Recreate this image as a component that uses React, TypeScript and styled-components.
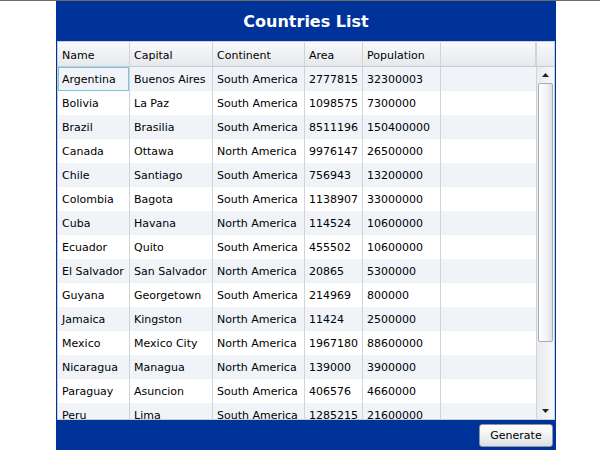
import React from "react";
import styled, { createGlobalStyle } from "styled-components";

const Global = createGlobalStyle`
  html, body { margin: 0; padding: 0; background: #ffffff; }
  body { font-family: "DejaVu Sans", Verdana, sans-serif; }
`;

const TopLine = styled.div`
  height: 1px;
  background: #6e6e60;
`;

const Panel = styled.div`
  width: 500px;
  height: 449px;
  margin-left: 56px;
  background: #003399;
  display: flex;
  flex-direction: column;
`;

const Title = styled.h1`
  margin: 0;
  height: 40px;
  display: flex;
  align-items: center;
  justify-content: center;
  color: #ffffff;
  font-family: "DejaVu Sans", Verdana, sans-serif;
  font-weight: bold;
  font-size: 16px;
`;

const Grid = styled.div`
  margin: 0 1px;
  height: 377px;
  background: #ffffff;
  border: 1px solid #c8ced6;
  display: flex;
  overflow: hidden;
`;

const Table = styled.div`
  flex: 1;
  display: flex;
  flex-direction: column;
  overflow: hidden;
`;

const cols = "72px 83px 92px 58px 78px 1fr";

const HeaderRow = styled.div`
  display: grid;
  grid-template-columns: ${cols};
  height: 24px;
  flex-shrink: 0;
  background: linear-gradient(#f8f9fa, #e6e9ec);
  border-bottom: 1px solid #c6cbd1;
`;

const HeaderCell = styled.div`
  display: flex;
  align-items: center;
  padding: 2px 0 0 4px;
  font-size: 11px;
  color: #000;
  border-right: 1px solid #d0d4d8;
`;

const Row = styled.div<{ $alt: boolean }>`
  display: grid;
  grid-template-columns: ${cols};
  height: 24px;
  flex-shrink: 0;
  background: ${(p) => (p.$alt ? "#f0f3f8" : "#ffffff")};
`;

const Cell = styled.div<{ $selected?: boolean; $last?: boolean }>`
  display: flex;
  align-items: center;
  padding-left: 4px;
  font-size: 11px;
  color: #000;
  white-space: nowrap;
  overflow: hidden;
  box-sizing: border-box;
  border-right: ${(p) => (p.$last ? "none" : "1px solid #d0d4d8")};
  ${(p) => (p.$selected ? "box-shadow: inset 0 0 0 1px #7ec5dc;" : "")}
`;

const ScrollCol = styled.div`
  width: 17px;
  display: flex;
  flex-direction: column;
  border-left: 1px solid #d0d4d8;
  background: linear-gradient(90deg, #e9ebee, #f6f7f8);
`;

const ScrollCorner = styled.div`
  height: 24px;
  background: linear-gradient(#f8f9fa, #e6e9ec);
  border-bottom: 1px solid #c6cbd1;
`;

const ArrowBox = styled.div`
  height: 16px;
  display: flex;
  align-items: center;
  justify-content: center;
`;

const Thumb = styled.div`
  margin: 0 1px;
  height: 257px;
  border: 1px solid #a6adb6;
  border-radius: 2px;
  background: linear-gradient(90deg, #ffffff, #f1f2f4 60%, #dde0e4);
`;

const Track = styled.div`
  flex: 1;
`;

const Footer = styled.div`
  flex: 1;
  display: flex;
  align-items: center;
  justify-content: flex-end;
  padding-right: 3px;
`;

const Button = styled.button`
  width: 74px;
  height: 23px;
  border: 1px solid #8e959d;
  border-radius: 3px;
  background: linear-gradient(#ffffff, #f1f2f3 50%, #dcdfe3);
  font-family: "DejaVu Sans", Verdana, sans-serif;
  font-size: 11px;
  color: #000;
  padding: 0;
`;

const data: [string, string, string, number, number][] = [
  ["Argentina", "Buenos Aires", "South America", 2777815, 32300003],
  ["Bolivia", "La Paz", "South America", 1098575, 7300000],
  ["Brazil", "Brasilia", "South America", 8511196, 150400000],
  ["Canada", "Ottawa", "North America", 9976147, 26500000],
  ["Chile", "Santiago", "South America", 756943, 13200000],
  ["Colombia", "Bagota", "South America", 1138907, 33000000],
  ["Cuba", "Havana", "North America", 114524, 10600000],
  ["Ecuador", "Quito", "South America", 455502, 10600000],
  ["El Salvador", "San Salvador", "North America", 20865, 5300000],
  ["Guyana", "Georgetown", "South America", 214969, 800000],
  ["Jamaica", "Kingston", "North America", 11424, 2500000],
  ["Mexico", "Mexico City", "North America", 1967180, 88600000],
  ["Nicaragua", "Managua", "North America", 139000, 3900000],
  ["Paraguay", "Asuncion", "South America", 406576, 4660000],
  ["Peru", "Lima", "South America", 1285215, 21600000],
];

const Up = () => (
  <svg width="7" height="4" viewBox="0 0 7 4"><path d="M0 4 L3.5 0 L7 4 Z" fill="#222" /></svg>
);
const Down = () => (
  <svg width="7" height="4" viewBox="0 0 7 4"><path d="M0 0 L3.5 4 L7 0 Z" fill="#222" /></svg>
);

export default function App() {
  return (
    <>
      <Global />
      <TopLine />
      <Panel>
        <Title>Countries List</Title>
        <Grid>
          <Table>
            <HeaderRow>
              <HeaderCell>Name</HeaderCell>
              <HeaderCell>Capital</HeaderCell>
              <HeaderCell>Continent</HeaderCell>
              <HeaderCell>Area</HeaderCell>
              <HeaderCell>Population</HeaderCell>
              <HeaderCell />
            </HeaderRow>
            {data.map((r, i) => (
              <Row key={r[0]} $alt={i % 2 === 0}>
                <Cell $selected={i === 0}>{r[0]}</Cell>
                <Cell>{r[1]}</Cell>
                <Cell>{r[2]}</Cell>
                <Cell>{r[3]}</Cell>
                <Cell>{r[4]}</Cell>
                <Cell $last />
              </Row>
            ))}
          </Table>
          <ScrollCol>
            <ScrollCorner />
            <ArrowBox><Up /></ArrowBox>
            <Thumb />
            <Track />
            <ArrowBox><Down /></ArrowBox>
          </ScrollCol>
        </Grid>
        <Footer>
          <Button>Generate</Button>
        </Footer>
      </Panel>
    </>
  );
}
